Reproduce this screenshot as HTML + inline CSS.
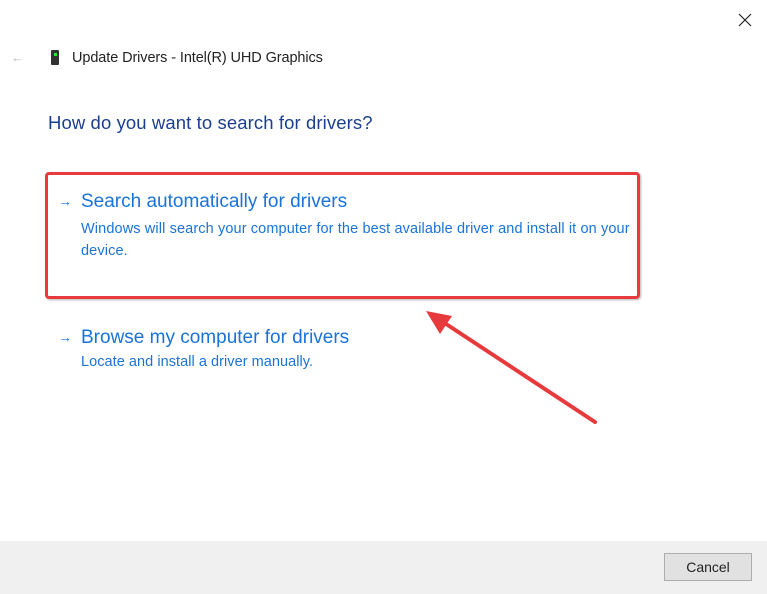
<!DOCTYPE html>
<html><head><style>
body{margin:0;width:767px;height:594px;background:#fff;font-family:"Liberation Sans",sans-serif;position:relative;overflow:hidden}
.a{position:absolute;white-space:nowrap}
</style></head><body>
<svg class="a" style="left:738px;top:13px" width="14" height="14"><path d="M1 1L13 13M13 1L1 13" stroke="#222" stroke-width="1.2"/></svg>
<div class="a" style="left:11px;top:50px;font-size:13px;color:#bbb">←</div>
<div class="a" style="left:51px;top:50px;width:8px;height:15px;background:#333;border-radius:1px"></div>
<div class="a" style="left:54px;top:53px;width:3px;height:3px;background:#2e2"></div>
<div class="a" style="left:72px;top:50px;font-size:14.5px;color:#222;letter-spacing:-0.1px">Update Drivers - Intel(R) UHD Graphics</div>
<div class="a" style="left:48px;top:112px;font-size:18.5px;color:#1b3f8f;letter-spacing:0.1px">How do you want to search for drivers?</div>
<div class="a" style="left:45px;top:172px;width:589px;height:121px;border:3px solid #e63a3d;border-radius:4px;box-shadow:1px 1px 2px rgba(0,0,0,.3)"></div>
<div class="a" style="left:58px;top:193px;font-size:14px;color:#1a73d6">→</div>
<div class="a" style="left:81px;top:191px;font-size:19px;color:#1a73d6">Search automatically for drivers</div>
<div class="a" style="left:81px;top:218px;font-size:14.5px;line-height:22px;color:#1a73d6;letter-spacing:0.12px">Windows will search your computer for the best available driver and install it on your<br>device.</div>
<div class="a" style="left:58px;top:329px;font-size:14px;color:#1a73d6">→</div>
<div class="a" style="left:81px;top:327px;font-size:19px;color:#1a73d6">Browse my computer for drivers</div>
<div class="a" style="left:81px;top:354px;font-size:14.5px;color:#1a73d6;letter-spacing:0.05px">Locate and install a driver manually.</div>
<svg class="a" style="left:0;top:0" width="767" height="594"><line x1="595" y1="422" x2="440" y2="320" stroke="#e63a3d" stroke-width="4" stroke-linecap="round"/><polygon points="426,311 452,316 440,334" fill="#e63a3d"/></svg>
<div class="a" style="left:0;top:541px;width:767px;height:53px;background:#f0f0f0"></div>
<div class="a" style="left:664px;top:553px;width:86px;height:26px;border:1px solid #adadad;background:#e1e1e1;font-size:14px;color:#222;text-align:center;line-height:26px">Cancel</div>
</body></html>
